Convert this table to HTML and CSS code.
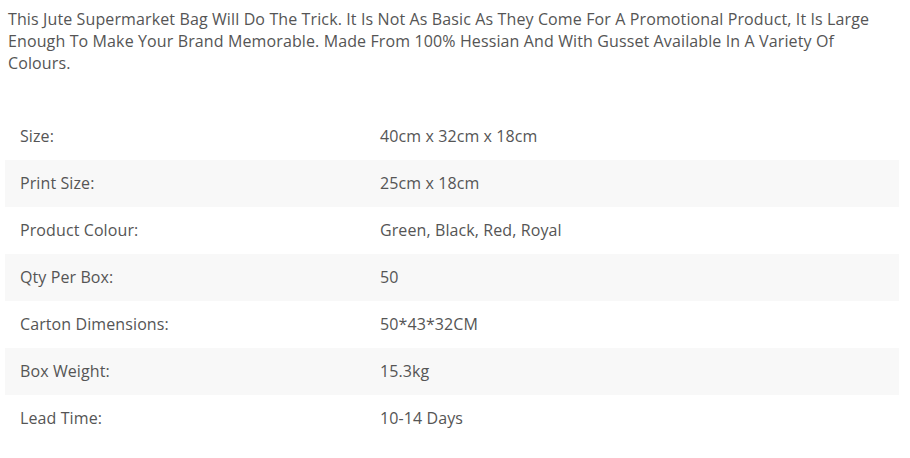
FILE: index.html
```html
<!DOCTYPE html>
<html lang="en">
<head>
<meta charset="utf-8">
<title>Jute Supermarket Bag</title>
<link rel="stylesheet" href="styles.css">
</head>
<body>
<div class="product">
  <p class="desc">This Jute Supermarket Bag Will Do The Trick. It Is Not As Basic As They Come For A Promotional Product, It Is Large Enough To Make Your Brand Memorable. Made From 100% Hessian And With Gusset Available In A Variety Of Colours.</p>
  <table class="specs">
    <tbody>
      <tr><td class="label">Size:</td><td class="value">40cm x 32cm x 18cm</td></tr>
      <tr><td class="label">Print Size:</td><td class="value">25cm x 18cm</td></tr>
      <tr><td class="label">Product Colour:</td><td class="value">Green, Black, Red, Royal</td></tr>
      <tr><td class="label">Qty Per Box:</td><td class="value">50</td></tr>
      <tr><td class="label">Carton Dimensions:</td><td class="value">50*43*32CM</td></tr>
      <tr><td class="label">Box Weight:</td><td class="value">15.3kg</td></tr>
      <tr><td class="label">Lead Time:</td><td class="value">10-14 Days</td></tr>
    </tbody>
  </table>
</div>
</body>
</html>
```

FILE: styles.css
```css
html, body {
  background: #ffffff;
}
body {
  margin: 8px 11px 0 5px;
  font-family: "Open Sans", "Liberation Sans", sans-serif;
  font-size: 16px;
  letter-spacing: 0.1px;
  color: #555555;
}
.desc {
  margin: 0 0 0 3px;
  line-height: 22px;
  letter-spacing: 0.12px;
}
.specs {
  width: 100%;
  margin-top: 39px;
  border-collapse: collapse;
  border-spacing: 0;
}
.specs td {
  height: 47px;
  padding: 0 15px;
  line-height: 23px;
  vertical-align: middle;
  box-sizing: border-box;
}
.specs .label {
  width: 360px;
}
.specs tr:nth-child(even) {
  background: #f8f8f8;
}
```
